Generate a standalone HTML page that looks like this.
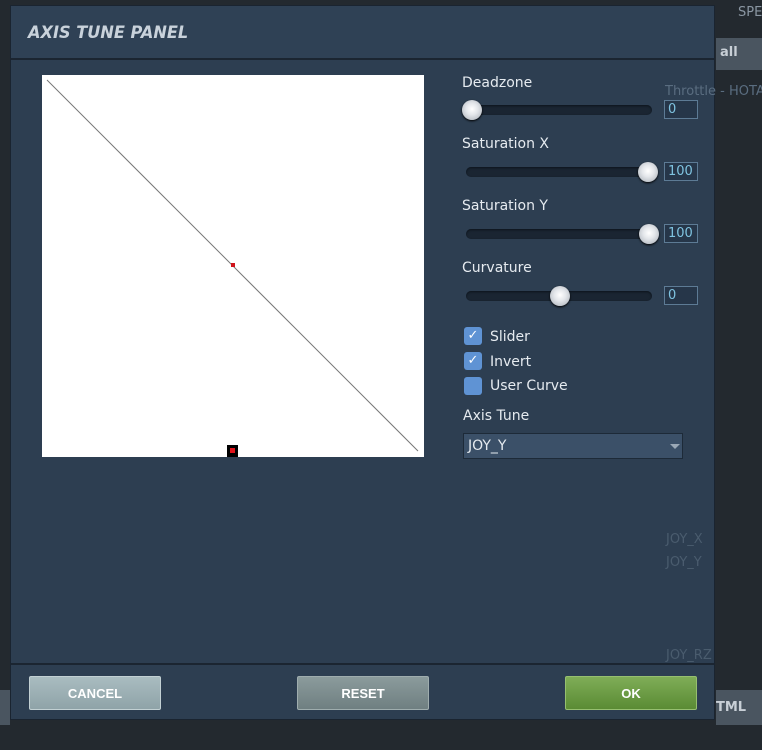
<!DOCTYPE html>
<html><head><style>
*{margin:0;padding:0;box-sizing:border-box}
body{width:762px;height:750px;background:#23292f;position:relative;overflow:hidden;font-family:"DejaVu Sans","Liberation Sans",sans-serif;}
.abs{position:absolute;white-space:nowrap}
.panel{left:10px;top:5px;width:705px;height:715px;background:#2d3e51;border:1px solid #1a2430;}
.hdr{left:11px;top:6px;width:703px;height:54px;background:#2f4155;border-bottom:2px solid #1b2531;}
.title{left:28px;top:23px;color:#c9d2db;font-weight:bold;font-style:italic;font-size:17px;transform:scaleX(0.95);transform-origin:left}
.ftr{left:11px;top:663px;width:703px;height:2px;background:#1b2531}
.lbl{color:#e6ebf0;font-size:14px}
.track{height:10px;border-radius:5px;background:#1a2532;box-shadow:inset 0 1px 2px #0d141c}
.thumb{width:20px;height:20px;border-radius:50%;background:radial-gradient(circle at 50% 45%,#fff 0,#e3e6ea 40%,#a5abb3 100%);box-shadow:0 1px 2px #000}
.inp{width:34px;height:19px;border:1px solid #5d7b95;background:#263649;color:#7fc3e0;font-size:13px;padding-left:3px;line-height:17px}
.cb{width:18px;height:18px;border-radius:3px;background:#5f93d4;color:#fff;font-size:13px;text-align:center;line-height:18px}
.btn{width:132px;height:34px;border-radius:2px;color:#fff;font-weight:bold;font-size:13px;text-align:center;line-height:34px;font-family:"Liberation Sans",sans-serif}
.ghost{color:#4a5c6e;font-size:13px}
</style></head><body>
<div class="abs" style="left:715px;top:0;width:47px;height:750px;background:#23292f"></div>
<div class="abs" style="left:716px;top:38px;width:46px;height:32px;background:#4a5560"></div>
<div class="abs" style="left:720px;top:45px;color:#c8cfd6;font-size:13px;font-weight:bold">all</div>
<div class="abs" style="left:738px;top:5px;color:#8a96a2;font-size:13px">SPE</div>
<div class="abs" style="left:716px;top:690px;width:46px;height:35px;background:#4a5560"></div>
<div class="abs" style="left:716px;top:700px;color:#c8cfd6;font-size:13px;font-weight:bold">TML</div>
<div class="abs" style="left:0;top:690px;width:10px;height:35px;background:#4a5560"></div>
<div class="abs panel"></div>
<div class="abs hdr"></div>
<div class="abs title">AXIS TUNE PANEL</div>
<div class="abs ghost" style="left:665px;top:84px;color:#5a6d80">Throttle - HOTA</div>
<div class="abs ghost" style="left:666px;top:532px">JOY_X</div>
<div class="abs ghost" style="left:666px;top:555px">JOY_Y</div>
<div class="abs ghost" style="left:666px;top:648px">JOY_RZ</div>

<svg class="abs" style="left:42px;top:75px" width="382" height="382">
<rect width="382" height="382" fill="#fff"/>
<line x1="5" y1="5" x2="376" y2="376" stroke="#777" stroke-width="1"/>
<rect x="189" y="188" width="4" height="4" fill="#d0141c"/>
<rect x="185" y="370" width="11" height="12" fill="#000"/>
<rect x="188" y="373" width="5" height="5" fill="#e0141c"/>
</svg>

<div class="abs lbl" style="left:462px;top:75px">Deadzone</div>
<div class="abs track" style="left:466px;top:105px;width:186px"></div>
<div class="abs thumb" style="left:462px;top:100px"></div>
<div class="abs inp" style="left:664px;top:100px">0</div>

<div class="abs lbl" style="left:462px;top:136px">Saturation X</div>
<div class="abs track" style="left:466px;top:167px;width:186px"></div>
<div class="abs thumb" style="left:638px;top:162px"></div>
<div class="abs inp" style="left:664px;top:162px">100</div>

<div class="abs lbl" style="left:462px;top:198px">Saturation Y</div>
<div class="abs track" style="left:466px;top:229px;width:186px"></div>
<div class="abs thumb" style="left:639px;top:224px"></div>
<div class="abs inp" style="left:664px;top:224px">100</div>

<div class="abs lbl" style="left:462px;top:260px">Curvature</div>
<div class="abs track" style="left:466px;top:291px;width:186px"></div>
<div class="abs thumb" style="left:550px;top:286px"></div>
<div class="abs inp" style="left:664px;top:286px">0</div>

<div class="abs cb" style="left:464px;top:327px">✓</div>
<div class="abs lbl" style="left:490px;top:329px">Slider</div>
<div class="abs cb" style="left:464px;top:352px">✓</div>
<div class="abs lbl" style="left:490px;top:354px">Invert</div>
<div class="abs cb" style="left:464px;top:377px"></div>
<div class="abs lbl" style="left:490px;top:378px">User Curve</div>

<div class="abs lbl" style="left:463px;top:408px">Axis Tune</div>
<div class="abs" style="left:463px;top:433px;width:220px;height:26px;background:#3b5068;border:1px solid #1d2a38"></div>
<div class="abs lbl" style="left:468px;top:438px">JOY_Y</div>
<div class="abs" style="left:670px;top:444px;width:0;height:0;border-left:5px solid transparent;border-right:5px solid transparent;border-top:5px solid #9aa8b6"></div>

<div class="abs ftr"></div>
<div class="abs btn" style="left:29px;top:676px;background:linear-gradient(#a9bcc0,#8fa3a8);border:1px solid #c2d0d3">CANCEL</div>
<div class="abs btn" style="left:297px;top:676px;background:linear-gradient(#8b9b9c,#6f7f81);border:1px solid #9fadae">RESET</div>
<div class="abs btn" style="left:565px;top:676px;background:linear-gradient(#7fad57,#5a8b34);border:1px solid #96bf70">OK</div>
</body></html>
